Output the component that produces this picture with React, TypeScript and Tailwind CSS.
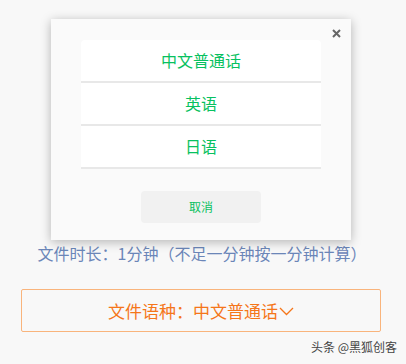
const FONT = { fontFamily: '"Noto Sans CJK SC", "Noto Sans", sans-serif' };

const options = ['中文普通话', '英语', '日语'];

export default function App() {
  return (
    <div className="relative h-[364px] w-[406px] overflow-hidden bg-[#f8f8f8]" style={FONT}>
      <div className="flex flex-col items-center pr-[4px] pt-[19px]">
        <div className="relative w-[300px] bg-[#fafafa] pb-[17px] pt-[21px] shadow-[0_2px_10px_rgba(0,0,0,0.28)]">
          <svg className="absolute right-[10px] top-[10px]" width="9" height="9" viewBox="0 0 9 9">
            <path d="M1 1L8 8M8 1L1 8" stroke="#666" strokeWidth="2" />
          </svg>
          <div className="mx-auto w-[240px]">
            {options.map((o) => (
              <div
                key={o}
                className="flex h-[43px] items-center justify-center border-b-2 border-[#e8e8e8] bg-white pb-[2px] text-[16px] text-[#07c160] first:rounded-t-[4px]"
              >
                {o}
              </div>
            ))}
          </div>
          <div className="mx-auto mt-[22px] flex h-[32px] w-[120px] items-center justify-center rounded-[4px] bg-[#f1f1f1] text-[12px] text-[#07c160]">
            取消
          </div>
        </div>
        <p className="ml-[2px] mt-[1px] text-[16px] leading-[24px] text-[#6b86b8]">文件时长：1分钟（不足一分钟按一分钟计算）</p>
        <div className="mt-[24px] flex h-[43px] w-[360px] items-center justify-center rounded-[2px] border border-[#f9b47c] text-[17px] text-[#f5761a]">
          文件语种：中文普通话
          <svg width="15" height="9" viewBox="0 0 15 9" className="ml-[1px] mt-[1px]">
            <path d="M1 1L7.5 7.5L14 1" fill="none" stroke="#f5761a" strokeWidth="1.3" />
          </svg>
        </div>
      </div>
      <span className="absolute bottom-[8px] right-[9px] text-[12px] text-[#444]">头条 @黑狐创客</span>
    </div>
  );
}
